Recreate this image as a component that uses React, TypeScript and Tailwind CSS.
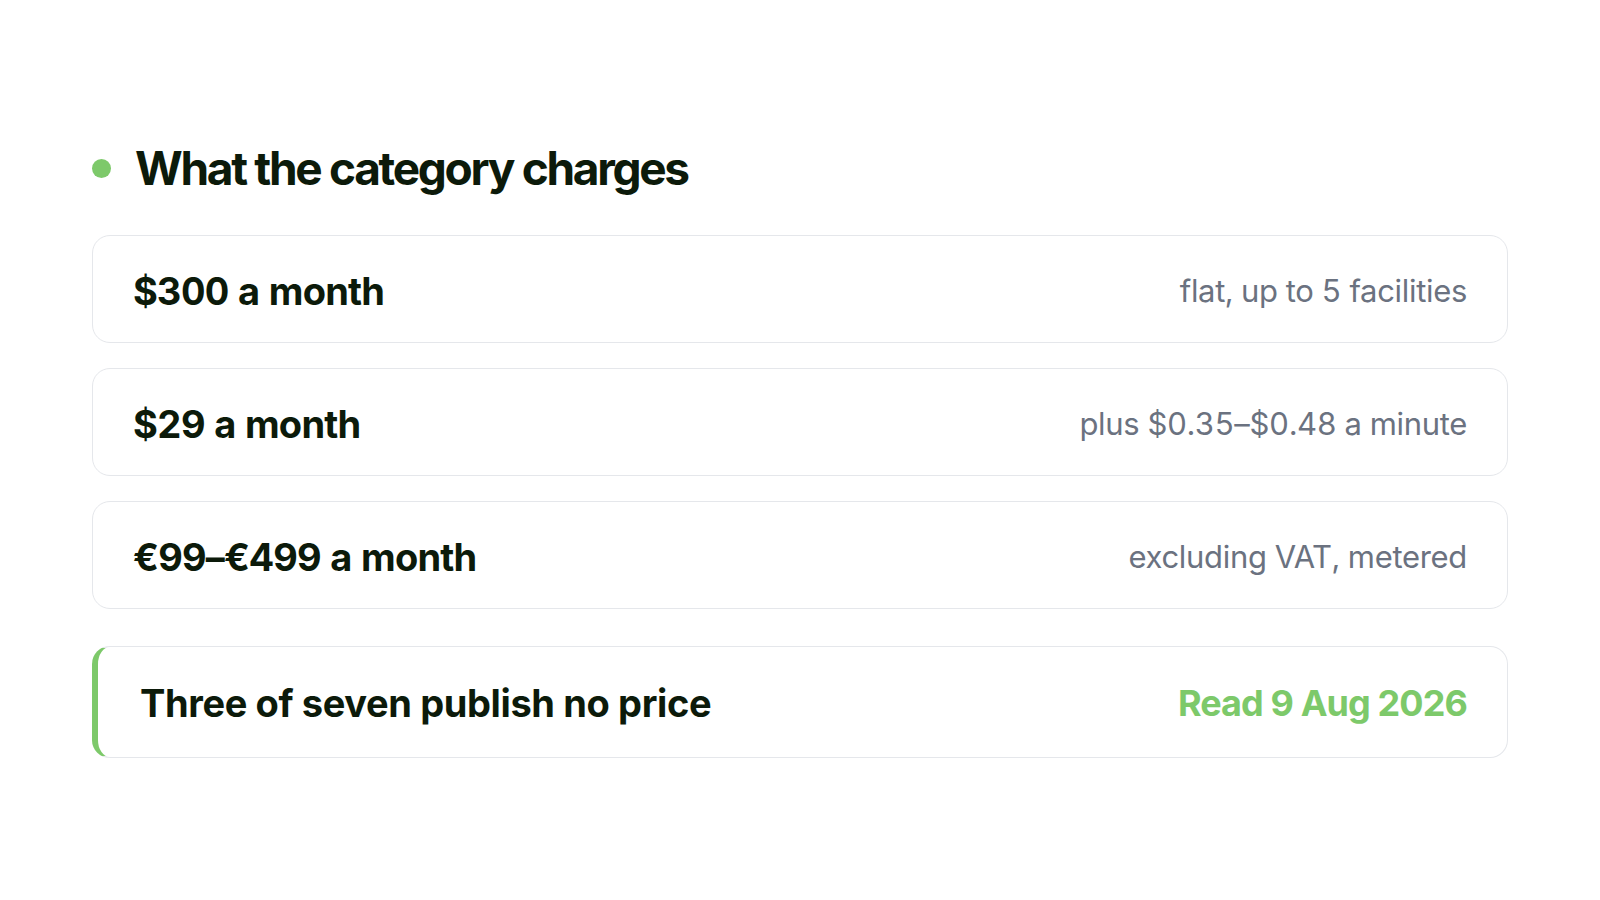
import React from 'react';

const rows = [
  { price: '$300 a month', note: 'flat, up to 5 facilities' },
  { price: '$29 a month', note: 'plus $0.35–$0.48 a minute' },
  { price: '€99–€499 a month', note: 'excluding VAT, metered' },
];

export default function App() {
  return (
    <div
      className="min-h-screen w-full bg-white px-[92px] pt-[140px]"
      style={{ fontFamily: 'Inter, "Noto Sans", sans-serif' }}
    >
      {/* Heading */}
      <div className="flex items-center gap-[24px] mb-[39px]">
        <span className="w-[19px] h-[19px] rounded-full bg-[#7dc96a] shrink-0" />
        <h2 className="text-[46px] leading-[56px] font-bold tracking-[-0.05em] text-[#0c1a0a]">
          What the category charges
        </h2>
      </div>

      {/* Price rows */}
      <div className="flex flex-col gap-[25px]">
        {rows.map(r => (
          <div
            key={r.price}
            className="flex items-center justify-between h-[108px] px-[40px] border border-[#e5e7eb] rounded-[18px] tabular-nums"
          >
            <span className="text-[38px] font-bold tracking-[-0.02em] text-[#0c1a0a] pt-[4px]">{r.price}</span>
            <span className="text-[31px] text-[#6b7280] tracking-[-0.01em] pt-[4px]">{r.note}</span>
          </div>
        ))}
      </div>

      {/* Summary */}
      <div className="mt-[37px] flex items-center justify-between h-[112px] pl-[42px] pr-[40px] border border-[#e5e7eb] border-l-[6px] border-l-[#7dc96a] rounded-[18px]">
        <span className="text-[38px] font-bold tracking-[-0.01em] text-[#0c1a0a] pt-[2px]">Three of seven publish no price</span>
        <span className="text-[36px] font-bold tracking-[-0.025em] text-[#7dc96a] pt-[2px]">Read 9 Aug 2026</span>
      </div>
    </div>
  );
}
